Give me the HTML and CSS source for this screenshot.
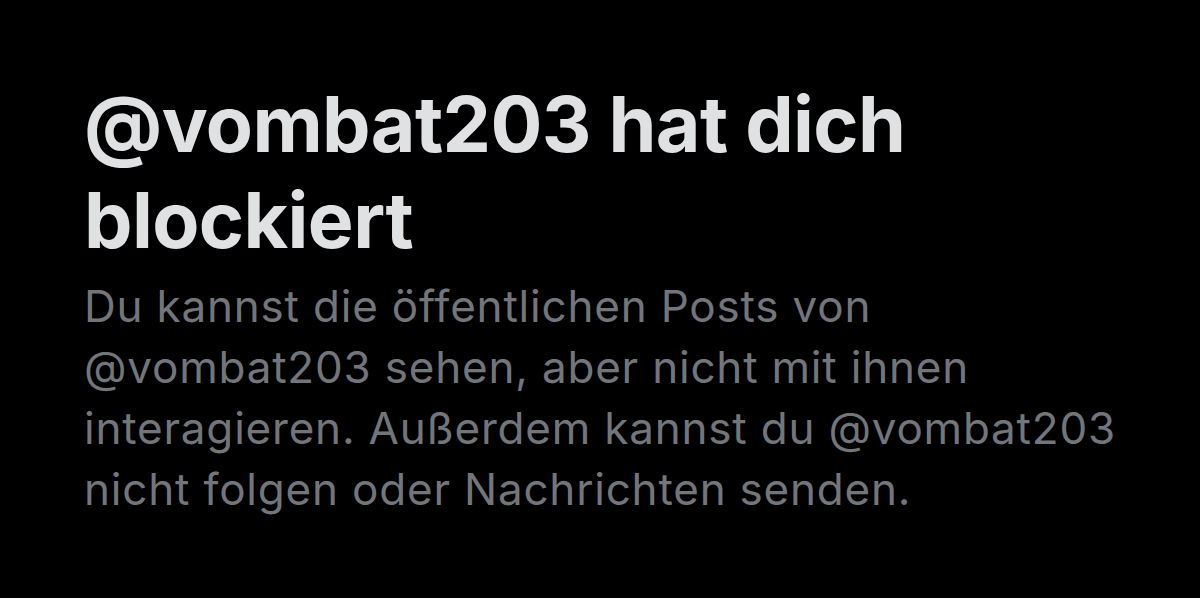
FILE: index.html
```html
<!DOCTYPE html>
<html lang="de">
<head>
<meta charset="UTF-8">
<meta name="viewport" content="width=device-width, initial-scale=1.0">
<title>Blockiert</title>
<link rel="stylesheet" href="styles.css">
</head>
<body>
<div class="blocked-notice">
  <h1 class="blocked-title">@vombat203 hat dich blockiert</h1>
  <p class="blocked-text">Du kannst die öffentlichen Posts von @vombat203 sehen, aber nicht mit ihnen interagieren. Außerdem kannst du @vombat203 nicht folgen oder Nachrichten senden.</p>
</div>
</body>
</html>
```

FILE: styles.css
```css
body {
  margin: 0;
  padding: 0;
  background-color: #000;
  font-family: Inter, "Noto Sans", sans-serif;
  height: 100vh;
}
.blocked-notice {
  padding: 76px 0 0 84px;
  max-width: 1040px;
}
.blocked-title {
  margin: 0;
  font-size: 77px;
  font-weight: 700;
  line-height: 96px;
  letter-spacing: -0.6px;
  color: #e0e1e2;
}
.blocked-text {
  margin: 8px 0 0;
  font-size: 44px;
  font-weight: 400;
  line-height: 61px;
  letter-spacing: 0.8px;
  color: #72767b;
}
```
